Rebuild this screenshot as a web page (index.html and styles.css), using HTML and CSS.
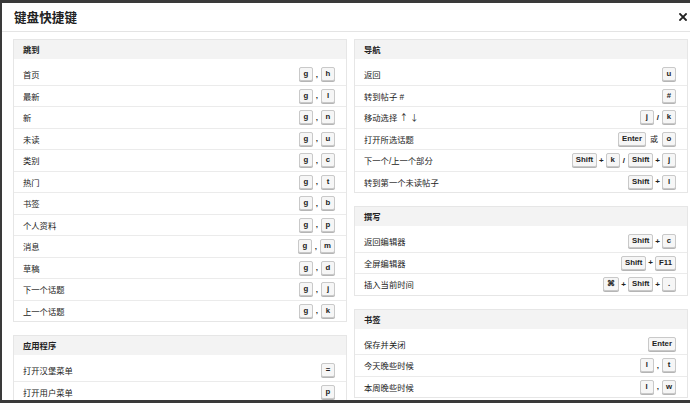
FILE: index.html
```html
<!DOCTYPE html>
<html lang="zh">
<head>
<meta charset="utf-8">
<title>键盘快捷键</title>
<link rel="stylesheet" href="styles.css">
</head>
<body>
<div class="modal">
  <div class="modal-header">
    <h3 class="title">键盘快捷键</h3>
    <span class="close" aria-label="关闭">
      <svg width="8" height="8" viewBox="0 0 8 8"><path d="M1 1L7 7M7 1L1 7" stroke="#222" stroke-width="1.8" stroke-linecap="square"/></svg>
    </span>
  </div>
  <div class="modal-body">
    <div class="column">
      <section class="box">
        <h4>跳到</h4>
        <ul>
          <li><span>首页</span><span class="keys"><kbd>g</kbd><i>,</i><kbd>h</kbd></span></li>
          <li><span>最新</span><span class="keys"><kbd>g</kbd><i>,</i><kbd>l</kbd></span></li>
          <li><span>新</span><span class="keys"><kbd>g</kbd><i>,</i><kbd>n</kbd></span></li>
          <li><span>未读</span><span class="keys"><kbd>g</kbd><i>,</i><kbd>u</kbd></span></li>
          <li><span>类别</span><span class="keys"><kbd>g</kbd><i>,</i><kbd>c</kbd></span></li>
          <li><span>热门</span><span class="keys"><kbd>g</kbd><i>,</i><kbd>t</kbd></span></li>
          <li><span>书签</span><span class="keys"><kbd>g</kbd><i>,</i><kbd>b</kbd></span></li>
          <li><span>个人资料</span><span class="keys"><kbd>g</kbd><i>,</i><kbd>p</kbd></span></li>
          <li><span>消息</span><span class="keys"><kbd>g</kbd><i>,</i><kbd>m</kbd></span></li>
          <li><span>草稿</span><span class="keys"><kbd>g</kbd><i>,</i><kbd>d</kbd></span></li>
          <li><span>下一个话题</span><span class="keys"><kbd>g</kbd><i>,</i><kbd>j</kbd></span></li>
          <li><span>上一个话题</span><span class="keys"><kbd>g</kbd><i>,</i><kbd>k</kbd></span></li>
        </ul>
      </section>
      <section class="box">
        <h4>应用程序</h4>
        <ul>
          <li><span>打开汉堡菜单</span><span class="keys"><kbd>=</kbd></span></li>
          <li><span>打开用户菜单</span><span class="keys"><kbd>p</kbd></span></li>
        </ul>
      </section>
    </div>
    <div class="column">
      <section class="box">
        <h4>导航</h4>
        <ul>
          <li><span>返回</span><span class="keys"><kbd>u</kbd></span></li>
          <li><span>转到帖子 #</span><span class="keys"><kbd>#</kbd></span></li>
          <li><span>移动选择 <span class="arrows">↑ ↓</span></span><span class="keys"><kbd>j</kbd><i>/</i><kbd>k</kbd></span></li>
          <li><span>打开所选话题</span><span class="keys"><kbd>Enter</kbd><i class="or">或</i><kbd>o</kbd></span></li>
          <li><span>下一个/上一个部分</span><span class="keys"><kbd>Shift</kbd><i class="plus">+</i><kbd>k</kbd><i>/</i><kbd>Shift</kbd><i class="plus">+</i><kbd>j</kbd></span></li>
          <li><span>转到第一个未读帖子</span><span class="keys"><kbd>Shift</kbd><i class="plus">+</i><kbd>l</kbd></span></li>
        </ul>
      </section>
      <section class="box">
        <h4>撰写</h4>
        <ul>
          <li><span>返回编辑器</span><span class="keys"><kbd>Shift</kbd><i class="plus">+</i><kbd>c</kbd></span></li>
          <li><span>全屏编辑器</span><span class="keys"><kbd>Shift</kbd><i class="plus">+</i><kbd>F11</kbd></span></li>
          <li><span>插入当前时间</span><span class="keys"><kbd>⌘</kbd><i class="plus">+</i><kbd>Shift</kbd><i class="plus">+</i><kbd>.</kbd></span></li>
        </ul>
      </section>
      <section class="box">
        <h4>书签</h4>
        <ul>
          <li><span>保存并关闭</span><span class="keys"><kbd>Enter</kbd></span></li>
          <li><span>今天晚些时候</span><span class="keys"><kbd>l</kbd><i>,</i><kbd>t</kbd></span></li>
          <li><span>本周晚些时候</span><span class="keys"><kbd>l</kbd><i>,</i><kbd>w</kbd></span></li>
        </ul>
      </section>
    </div>
  </div>
</div>
</body>
</html>
```

FILE: styles.css
```css
html, body {
  margin: 0;
  padding: 0;
}
body {
  background: #3a3a3a;
  height: 403px;
  overflow: hidden;
  padding: 3px 0 0 2px;
  box-sizing: border-box;
  font-family: "Liberation Sans", "Noto Sans CJK SC", sans-serif;
  color: #222;
}
.modal {
  background: #fff;
  height: 397px;
  overflow: hidden;
}
.modal-header {
  height: 28px;
  border-bottom: 1px solid #e4e4e4;
  display: flex;
  align-items: center;
  justify-content: space-between;
  padding: 0 3px 0 12px;
}
.title {
  margin: 0;
  font-size: 12.6px;
  font-weight: bold;
  font-family: "Noto Sans CJK SC", sans-serif;
  line-height: 1;
}
.close {
  display: flex;
  width: 8px;
  height: 8px;
}
.modal-body {
  padding: 7px 0 0 11px;
  display: grid;
  grid-template-columns: 334px 334px;
  column-gap: 7px;
  align-items: start;
}
.column {
  display: flex;
  flex-direction: column;
  gap: 13px;
}
.box {
  border: 1px solid #e6e6e6;
}
.box h4 {
  margin: 0;
  height: 19px;
  line-height: 19px;
  background: #f3f3f3;
  font-size: 8.3px;
  font-weight: bold;
  padding-left: 9px;
  font-family: "Noto Sans CJK SC", sans-serif;
}
.box ul {
  list-style: none;
  margin: 0;
  padding: 5px 0 0 0;
}
.box li {
  display: flex;
  align-items: center;
  justify-content: space-between;
  height: 20.5px;
  border-bottom: 1px solid #ebebeb;
  padding: 0 11px 0 9px;
  font-size: 8.3px;
}
.box li:last-child {
  border-bottom: none;
}
.arrows {
  font-family: "Noto Sans CJK SC", sans-serif;
  font-size: 8.6px;
}
.keys {
  display: flex;
  align-items: center;
}
.keys i {
  font-style: normal;
  font-size: 8px;
  margin: 0 3px;
  font-weight: bold;
}
.keys i.or {
  margin: 0 4px;
  font-weight: normal;
  font-family: "Noto Sans CJK SC", sans-serif;
}
.keys i.plus {
  margin: 0 2px;
}
kbd {
  display: inline-block;
  box-sizing: border-box;
  min-width: 14px;
  height: 14px;
  line-height: 12px;
  padding: 0 3px;
  border: 1px solid #c9c9c9;
  border-radius: 2px;
  background: #f6f6f6;
  box-shadow: 0 1px 0 #b5b5b5;
  font-family: "Liberation Sans", sans-serif;
  font-size: 7.8px;
  font-weight: bold;
  text-align: center;
  color: #222;
}
```
